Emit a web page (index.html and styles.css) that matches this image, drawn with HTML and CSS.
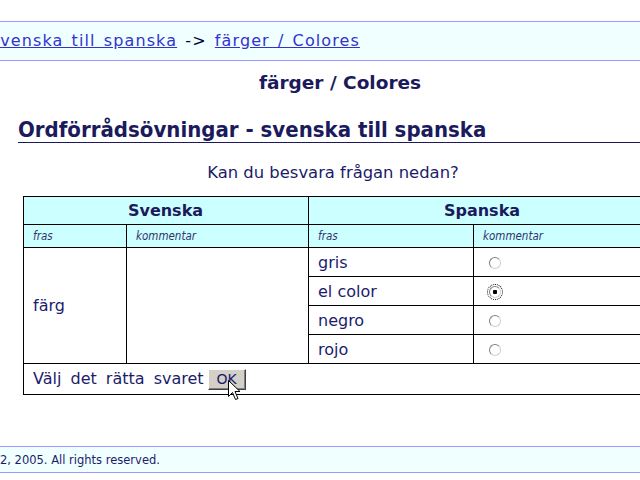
FILE: index.html
```html
<!DOCTYPE html>
<html lang="sv">
<head>
<meta charset="utf-8">
<title>färger / Colores</title>
<link rel="stylesheet" href="styles.css">
</head>
<body>
<div class="topbar">
  <span class="crumbs"><a href="#">Svenska till spanska</a> -&gt; <a href="#">färger / Colores</a></span>
</div>
<div class="main">
  <div class="subtitle">färger / Colores</div>
  <h2 class="heading">Ordförrådsövningar - svenska till spanska</h2>
  <p class="question">Kan du besvara frågan nedan?</p>
  <table class="quiz">
    <colgroup>
      <col class="c1"><col class="c2"><col class="c3"><col class="c4">
    </colgroup>
    <tr class="head">
      <th colspan="2">Svenska</th>
      <th colspan="2">Spanska</th>
    </tr>
    <tr class="sub">
      <td>fras</td><td>kommentar</td><td>fras</td><td>kommentar</td>
    </tr>
    <tr class="row">
      <td rowspan="4">färg</td>
      <td rowspan="4"></td>
      <td>gris</td>
      <td><span class="radio"></span></td>
    </tr>
    <tr class="row">
      <td>el color</td>
      <td><span class="radio checked"></span></td>
    </tr>
    <tr class="row">
      <td>negro</td>
      <td><span class="radio"></span></td>
    </tr>
    <tr class="row">
      <td>rojo</td>
      <td><span class="radio"></span></td>
    </tr>
    <tr class="last">
      <td colspan="4"><span class="answer">Välj det rätta svaret</span><span class="okwrap"><button class="ok" type="button">OK</button><svg class="cursor" width="13" height="21" viewBox="0 0 13 21"><path d="M0.5 0.5 L0.5 16.5 L4.5 12.5 L7.5 19.5 L10 18.5 L7 11.5 L12 11.5 Z" fill="#fff" stroke="#000" stroke-width="1"/></svg></span></td>
    </tr>
  </table>
</div>
<div class="footer"><span class="copy">2002, 2005. All rights reserved.</span></div>
</body>
</html>
```
FILE: styles.css
```css
html, body {
  margin: 0;
  padding: 0;
  overflow: hidden;
  background: #fff;
}
body {
  padding-top: 21px;
  font-family: "DejaVu Sans", Verdana, sans-serif;
  color: #1c1c6b;
  width: 700px;
}
.topbar {
  height: 38px;
  line-height: 38px;
  background: #f0ffff;
  border-top: 1px solid #9999ff;
  border-bottom: 1px solid #9999ff;
  font-size: 16px;
  letter-spacing: 1.1px;
  word-spacing: 2px;
  white-space: nowrap;
  color: #000033;
}
.crumbs {
  display: inline-block;
  margin-left: -11px;
}
.crumbs a {
  color: #3333cc;
  text-decoration: underline;
}
.main {
  width: 680px;
}
.subtitle {
  margin-top: 11px;
  text-align: center;
  font-weight: bold;
  font-size: 18.5px;
  line-height: 21px;
  color: #1a1a5c;
}
.heading {
  margin: 25px 0 0 18px;
  padding: 0;
  font-family: "DejaVu Sans Condensed", "DejaVu Sans", sans-serif;
  font-size: 22px;
  line-height: 24px;
  font-weight: bold;
  color: #1a1a5c;
  border-bottom: 1px solid #1a1a5c;
  white-space: nowrap;
}
.question {
  margin: 20px 0 0 0;
  padding-right: 14px;
  text-align: center;
  font-size: 16.4px;
  line-height: 20px;
  color: #1c1c6b;
}
.quiz {
  margin: 13px 0 0 23px;
  width: 633px;
  table-layout: fixed;
  border-collapse: collapse;
  font-size: 16px;
  color: #1c1c6b;
}
.c1 { width: 103px; }
.c2 { width: 182px; }
.c3 { width: 165px; }
.c4 { width: 183px; }
.quiz th, .quiz td {
  border: 1px solid #000;
  padding: 0 10px 0 9px;
  text-align: left;
}
.quiz tr.head th {
  height: 27px;
  background: #ccffff;
  text-align: center;
  font-weight: bold;
  font-size: 16px;
  color: #1a1a5c;
}
.quiz tr.sub td {
  height: 22px;
  background: #ccffff;
  font-family: "DejaVu Sans Condensed", "DejaVu Sans", sans-serif;
  font-style: italic;
  font-size: 11.5px;
  color: #33336b;
}
.quiz tr.row td {
  height: 28px;
}
.quiz tr.last td {
  height: 30px;
  white-space: nowrap;
}
.radio {
  display: inline-block;
  width: 10px;
  height: 10px;
  margin-left: 6px;
  border-radius: 50%;
  border: 1px solid;
  border-color: #808080 #d4d0c8 #d4d0c8 #808080;
  background: #fff;
  vertical-align: -1px;
}
.radio.checked {
  background: radial-gradient(circle, #000 0 2px, #fff 2.5px);
  outline: 1px dotted #000;
  outline-offset: 1px;
}
.answer {
  word-spacing: 4px;
  margin-right: 4px;
}
.okwrap {
  position: relative;
  display: inline-block;
  vertical-align: middle;
}
.ok {
  display: block;
  width: 38px;
  height: 21px;
  padding: 0;
  font-family: "DejaVu Sans", sans-serif;
  font-size: 14px;
  color: #1a1a6e;
  background: #d4d0c8;
  border: 1px solid;
  border-color: #fff #404040 #404040 #fff;
  box-shadow: inset -1px -1px 0 #808080;
}
.cursor {
  position: absolute;
  left: 20px;
  top: 11px;
}
.footer {
  margin-top: 51px;
  height: 25px;
  line-height: 27px;
  background: #f0ffff;
  border-top: 1px solid #9999ff;
  border-bottom: 1px solid #9999ff;
  font-size: 11.5px;
  white-space: nowrap;
  color: #1c1c6b;
}
.copy {
  display: inline-block;
  margin-left: -22px;
}
```
